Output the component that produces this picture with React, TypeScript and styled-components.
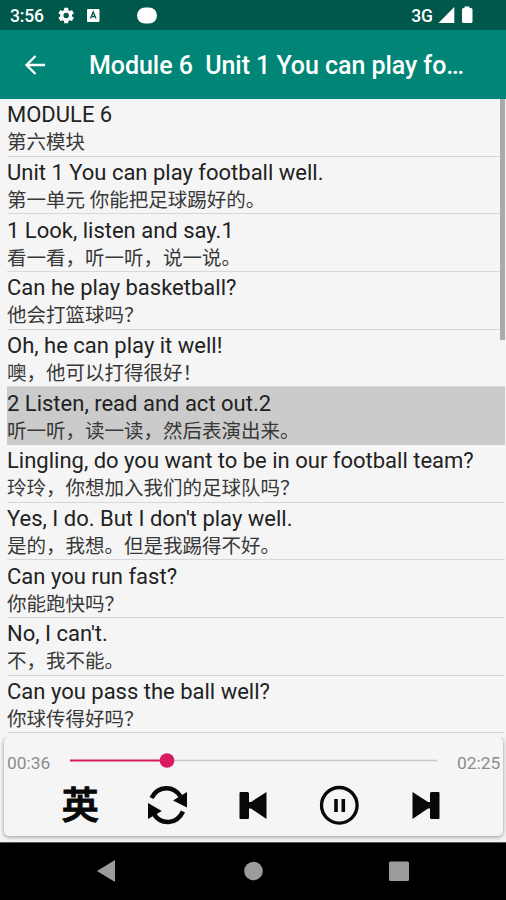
import React from 'react';
import styled, { createGlobalStyle } from 'styled-components';

const GlobalStyle = createGlobalStyle`
  * { box-sizing: border-box; }
  body { margin: 0; background: #f5f5f5; }
`;

const Screen = styled.div`
  width: 506px;
  height: 900px;
  display: flex;
  flex-direction: column;
  overflow: hidden;
  background: #f5f5f5;
  font-family: Roboto, 'Noto Sans CJK SC', sans-serif;
`;

const StatusBar = styled.header`
  height: 30px;
  flex: none;
  display: flex;
  align-items: center;
  background: #00574b;
  color: #fff;
`;

const Clock = styled.span`
  width: 48px;
  padding: 2px 0 0 10px;
  font-size: 17.5px;
  font-weight: 500;
  letter-spacing: -0.2px;
  white-space: nowrap;
  line-height: 20px;
`;

const StatusIcons = styled.svg`
  width: 120px;
  height: 30px;
  margin-left: 7px;
`;

const Network = styled.span`
  margin-left: auto;
  padding-top: 1px;
  font-size: 17.5px;
  font-weight: 500;
  line-height: 20px;
`;

const SignalIcons = styled.svg`
  width: 73px;
  height: 30px;
`;

const AppBar = styled.div`
  height: 68.5px;
  flex: none;
  display: flex;
  align-items: center;
  background: #008577;
  color: #fff;
`;

const BackIcon = styled.svg`
  width: 22px;
  height: 22px;
  margin: 1px 43px 0 24px;
`;

const Title = styled.h1`
  margin: 4px 0 0;
  font-size: 25px;
  font-weight: 500;
  line-height: 32px;
  white-space: pre;
  letter-spacing: -0.05px;
`;

const Lines = styled.main`
  position: relative;
  height: 638.5px;
  flex: none;
  padding: 0.5px 1px 0 6.5px;
  overflow: hidden;
`;

const ScrollThumb = styled.div`
  position: absolute;
  top: 0;
  right: 1px;
  width: 5px;
  height: 241px;
  background: #aaa;
`;

const Row = styled.section<{ $active?: boolean }>`
  height: 57.68px;
  padding: 2.2px 0 0 0.5px;
  border-bottom: 1px solid ${p => (p.$active ? '#cbcbcb' : '#d8d8d8')};
  background: ${p => (p.$active ? '#cbcbcb' : 'transparent')};
  white-space: nowrap;
`;

const English = styled.p`
  margin: 0;
  font-size: 22px;
  line-height: 28px;
  letter-spacing: 0;
  color: #222;
`;

const Chinese = styled.p`
  margin: 0;
  font-size: 19.5px;
  line-height: 28px;
  font-weight: 400;
  color: #383838;
`;

const Player = styled.footer`
  height: 99px;
  flex: none;
  margin: 0 3px 6px 4px;
  border-radius: 5px;
  background: #f5f5f5;
  box-shadow: 0 1px 4px rgba(0, 0, 0, 0.4);
  clip-path: inset(0 -3px -6px -4px);
`;

const Progress = styled.div`
  height: 46px;
  display: flex;
  align-items: center;
  padding: 2px 2px 0 3px;
`;

const Time = styled.span`
  width: 44px;
  padding-top: 3px;
  font-size: 17.4px;
  line-height: 20px;
  color: #8c8c8c;
`;

const Slider = styled.svg`
  width: 376px;
  height: 18px;
  margin: 0 15px 0 15px;
`;

const Controls = styled.div`
  display: flex;
  padding-left: 33px;
`;

const Control = styled.button`
  width: 86.5px;
  height: 44px;
  padding: 0;
  border: 0;
  background: none;
  color: #080808;
  display: flex;
  align-items: center;
  justify-content: center;
`;

const ControlIcon = styled.svg`
  width: 44px;
  height: 44px;
`;

const Language = styled.span`
  margin-top: -5px;
  font: 500 37px/42px 'Noto Sans CJK SC', sans-serif;
  -webkit-text-stroke: 1.2px currentColor;
  stroke-linejoin: round;
`;

const NavBar = styled.nav`
  height: 58px;
  flex: none;
  display: flex;
  align-items: center;
  background: #000;
  border-top: 1px solid #555;
`;

const NavIcons = styled.svg`
  width: 506px;
  height: 57px;
`;

const lines: { en: string; zh: string; active?: boolean }[] = [
  { en: 'MODULE 6', zh: '第六模块' },
  { en: 'Unit 1 You can play football well.', zh: '第一单元 你能把足球踢好的。' },
  { en: '1 Look, listen and say.1', zh: '看一看，听一听，说一说。' },
  { en: 'Can he play basketball?', zh: '他会打篮球吗？' },
  { en: 'Oh, he can play it well!', zh: '噢，他可以打得很好！' },
  { en: '2 Listen, read and act out.2', zh: '听一听，读一读，然后表演出来。', active: true },
  { en: 'Lingling, do you want to be in our football team?', zh: '玲玲，你想加入我们的足球队吗？' },
  { en: "Yes, I do. But I don't play well.", zh: '是的，我想。但是我踢得不好。' },
  { en: 'Can you run fast?', zh: '你能跑快吗？' },
  { en: "No, I can't.", zh: '不，我不能。' },
  { en: 'Can you pass the ball well?', zh: '你球传得好吗？' },
];

const RepeatIcon = () => (
  <ControlIcon viewBox="0 0 44 44" fill="none" stroke="currentColor" strokeWidth="4.500">
    <path d="M6.500 15C13 2.500 28.500 2 36 14" />
    <path d="M38 28.500C31.500 42 16 42.500 8.500 30.500" />
    <path d="M42 9v15.500L28 17.500z" fill="currentColor" stroke="none" />
    <path d="M3 36v-16L16.800 28z" fill="currentColor" stroke="none" />
  </ControlIcon>
);

const SkipIcon = ({ next = false }: { next?: boolean }) => (
  <ControlIcon viewBox="0 0 44 44" fill="currentColor">
    <g transform={next ? 'matrix(-1 0 0 1 44 0)' : undefined}>
      <path d="M9.500 9h7q1.500 0 1.500 1.500v8.500h2L35.500 9v27L20 25.500h-2V34.500q0 1.500-1.500 1.500h-7Q8.500 36 8.500 35v-25Q8.500 9 9.500 9z" />
    </g>
  </ControlIcon>
);

const PauseIcon = () => (
  <ControlIcon viewBox="0 0 44 44" fill="none" stroke="currentColor">
    <circle cx="21.300" cy="22.300" r="17.800" strokeWidth="3.300" />
    <path d="M18 16v13M25.300 16v13" strokeWidth="3.600" />
  </ControlIcon>
);

export default function App() {
  return (
    <Screen>
      <GlobalStyle />
      <StatusBar>
        <Clock>3:56</Clock>
        <StatusIcons viewBox="55 0 120 30" fill="#fff">
          <g transform="translate(56.800 6.200) scale(.78)">
            <path d="M19.430 12.980c.040-.320.070-.640.070-.980s-.030-.660-.070-.980l2.110-1.650a.5.5 0 0 0 .120-.640l-2-3.460a.5.5 0 0 0-.610-.220l-2.490 1a7.300 7.300 0 0 0-1.690-.980l-.380-2.650A.49.49 0 0 0 14 2h-4a.49.49 0 0 0-.490.420l-.380 2.650c-.610.250-1.170.590-1.690.980l-2.490-1a.5.5 0 0 0-.610.220l-2 3.460a.5.5 0 0 0 .120.640l2.110 1.650a7.900 7.900 0 0 0 0 1.960l-2.110 1.650a.5.5 0 0 0-.120.640l2 3.460c.120.220.390.300.610.220l2.490-1c.520.400 1.080.730 1.690.980l.380 2.650c.030.240.240.420.490.420h4c.250 0 .460-.180.490-.420l.380-2.650a7.300 7.300 0 0 0 1.690-.980l2.490 1c.230.090.490 0 .610-.220l2-3.460a.5.5 0 0 0-.120-.640zM12 15.500a3.500 3.500 0 1 1 0-7 3.500 3.500 0 0 1 0 7z" />
          </g>
          <rect x="87" y="9" width="12.500" height="13" rx="1" />
          <path d="M90.500 18.500l2.700-6.500L96 18.500M91.500 16.500h3.500" fill="none" stroke="#00574b" strokeWidth="1.300" />
          <rect x="137" y="7.500" width="20" height="16" rx="8" />
        </StatusIcons>
        <Network>3G</Network>
        <SignalIcons viewBox="433 0 73 30" fill="#fff">
          <path d="M438.500 23L454.300 7v16z" />
          <path d="M464.500 8V6.500h5V8h1.500q1.500 0 1.500 1.500v12q0 1.500-1.500 1.500h-7.500q-1.500 0-1.500-1.500v-12q0-1.500 1.500-1.500z" />
        </SignalIcons>
      </StatusBar>
      <AppBar>
        <BackIcon viewBox="0 0 22 22" fill="none" stroke="#fff" strokeWidth="2.300">
          <path d="M21 11H3M11.500 2l-9 9 9 9" />
        </BackIcon>
        <Title>Module 6  Unit 1 You can play fo…</Title>
      </AppBar>
      <Lines>
        {lines.map(line => (
          <Row key={line.en} $active={line.active}>
            <English>{line.en}</English>
            <Chinese lang="zh-CN">{line.zh}</Chinese>
          </Row>
        ))}
        <ScrollThumb />
      </Lines>
      <Player>
        <Progress>
          <Time>00:36</Time>
          <Slider viewBox="66 0 376 18">
            <path d="M167 8.500H437" stroke="#c8c8c8" strokeWidth="1.700" />
            <path d="M70 8.500H167" stroke="#d81b60" strokeWidth="2.200" />
            <circle cx="167" cy="8.500" r="7.300" fill="#d81b60" />
          </Slider>
          <Time>02:25</Time>
        </Progress>
        <Controls>
          <Control aria-label="Language"><Language>英</Language></Control>
          <Control aria-label="Repeat"><RepeatIcon /></Control>
          <Control aria-label="Previous"><SkipIcon /></Control>
          <Control aria-label="Pause"><PauseIcon /></Control>
          <Control aria-label="Next"><SkipIcon next /></Control>
        </Controls>
      </Player>
      <NavBar>
        <NavIcons viewBox="0 843 506 57" fill="#9b9b9b">
          <path d="M97 871l18-11v22z" />
          <circle cx="253.500" cy="871" r="9.300" />
          <rect x="389" y="861.500" width="20" height="19.500" rx="1.500" />
        </NavIcons>
      </NavBar>
    </Screen>
  );
}
